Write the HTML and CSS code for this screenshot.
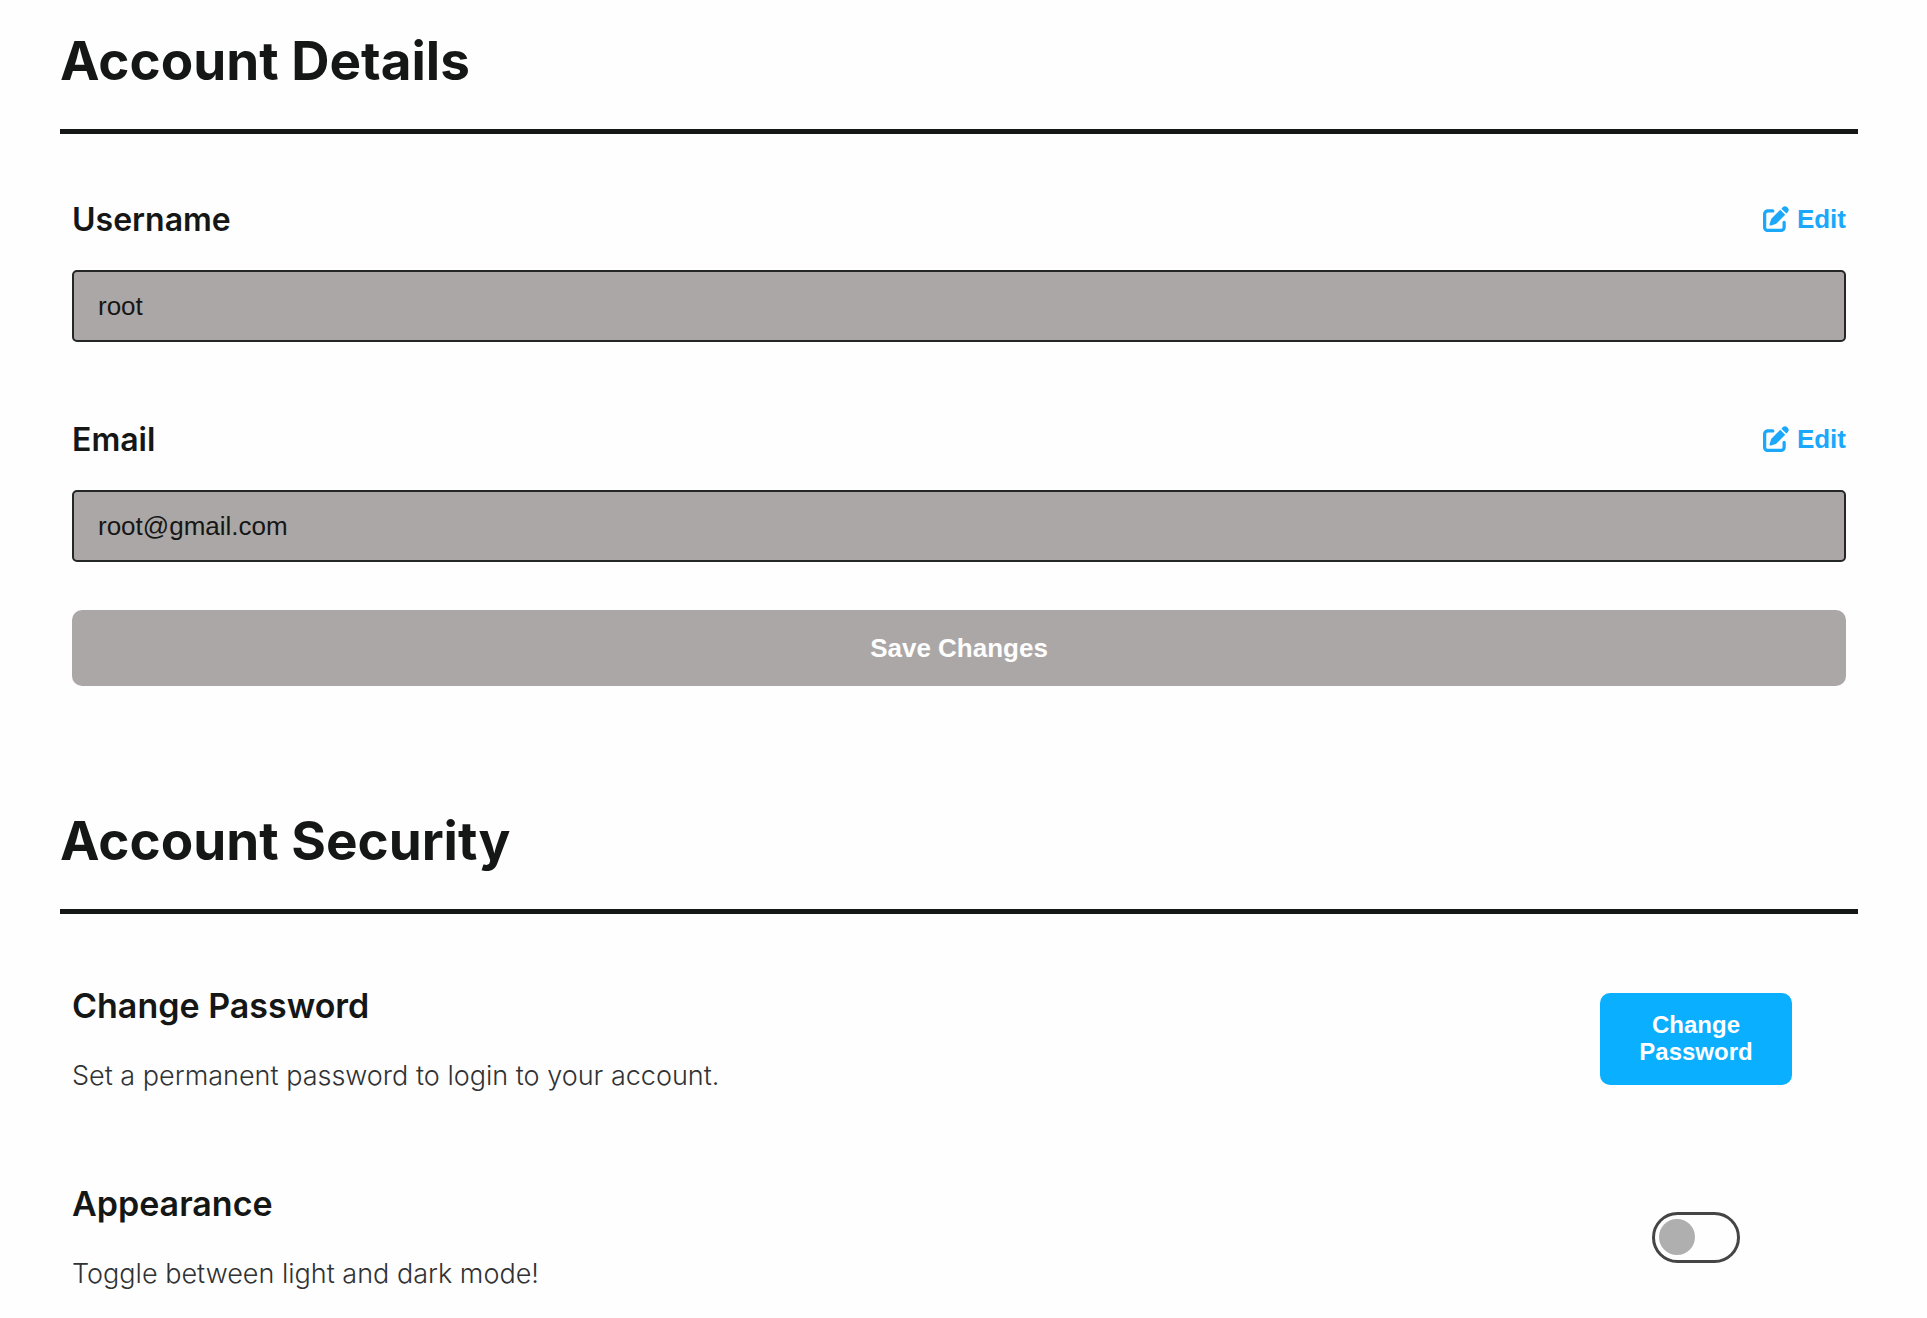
FILE: index.html
```html
<!DOCTYPE html>
<html lang="en">
<head>
<meta charset="utf-8">
<meta name="viewport" content="width=device-width, initial-scale=1">
<title>Account Settings</title>
<link rel="stylesheet" href="styles.css">
</head>
<body>
<svg class="sprite" aria-hidden="true">
  <symbol id="icon-edit" viewBox="0 0 512 512">
    <path d="M471.600 21.700c-21.900-21.900-57.300-21.900-79.200 0L362.300 51.700l97.900 97.900 30.100-30.100c21.900-21.900 21.900-57.300 0-79.200L471.600 21.700zm-299.200 220c-6.100 6.100-10.800 13.600-13.500 21.900l-29.600 88.800c-2.900 8.600-.6 18.100 5.800 24.600s15.900 8.700 24.600 5.800l88.800-29.600c8.200-2.700 15.700-7.400 21.900-13.500L437.700 172.300 339.700 74.300 172.400 241.700zM96 64C43 64 0 107 0 160V416c0 53 43 96 96 96H352c53 0 96-43 96-96V320c0-17.700-14.300-32-32-32s-32 14.300-32 32v96c0 17.700-14.300 32-32 32H96c-17.700 0-32-14.300-32-32V160c0-17.700 14.300-32 32-32h96c17.700 0 32-14.300 32-32s-14.300-32-32-32H96z"/>
  </symbol>
</svg>
<main class="settings">
  <section>
    <h1 class="section-title">Account Details</h1>
    <form class="form">
      <div class="field">
        <div class="field-head">
          <label class="label" for="username">Username</label>
          <button class="edit" type="button"><svg class="edit-icon" aria-hidden="true"><use href="#icon-edit"/></svg>Edit</button>
        </div>
        <input class="input" id="username" type="text" value="root" disabled>
      </div>
      <div class="field">
        <div class="field-head">
          <label class="label" for="email">Email</label>
          <button class="edit" type="button"><svg class="edit-icon" aria-hidden="true"><use href="#icon-edit"/></svg>Edit</button>
        </div>
        <input class="input" id="email" type="email" value="root@gmail.com" disabled>
      </div>
      <button class="save" type="submit" disabled>Save Changes</button>
    </form>
  </section>
  <section>
    <h1 class="section-title">Account Security</h1>
    <div class="options">
      <div class="option">
        <div>
          <h2 class="option-title">Change Password</h2>
          <p class="option-text">Set a permanent password to login to your account.</p>
        </div>
        <div class="option-control">
          <button class="change" type="button">Change Password</button>
        </div>
      </div>
      <div class="option">
        <div>
          <h2 class="option-title"><label for="theme">Appearance</label></h2>
          <p class="option-text">Toggle between light and dark mode!</p>
        </div>
        <div class="option-control">
          <input class="toggle" id="theme" type="checkbox" role="switch">
        </div>
      </div>
    </div>
  </section>
</main>
</body>
</html>
```
FILE: styles.css
```css
* {
  box-sizing: border-box;
}

body {
  margin: 0;
  background: #fefefe;
  color: #151716;
  font-family: Inter, "Liberation Sans", sans-serif;
}

.sprite {
  display: none;
}

.settings {
  display: flex;
  flex-direction: column;
  gap: 123px;
  padding: 29px 69px 0 60px;
}

.section-title {
  margin: 0;
  padding-bottom: 36px;
  border-bottom: 5px solid #151716;
  font-size: 53px;
  font-weight: 700;
  line-height: 64px;
}

.form {
  display: flex;
  flex-direction: column;
  padding: 64px 12px 0;
}

.field {
  margin-bottom: 76px;
}

.field + .field {
  margin-bottom: 48px;
}

.field-head {
  display: flex;
  justify-content: space-between;
  align-items: flex-start;
  height: 44px;
  margin-bottom: 28px;
}

.label {
  font-size: 32px;
  font-weight: 600;
  line-height: 44px;
}

.edit {
  display: flex;
  align-items: center;
  gap: 8px;
  padding: 0;
  border: 0;
  background: none;
  color: #1ba8fb;
  font: 700 26px/42px "Liberation Sans", Arial, sans-serif;
}

.edit-icon {
  width: 26px;
  height: 26px;
  fill: currentColor;
}

.input {
  display: block;
  width: 100%;
  height: 72px;
  padding: 0 24px;
  border: 2px solid #252727;
  border-radius: 5px;
  background: #aba7a6;
  color: #151716;
  font: 26px "Liberation Sans", Arial, sans-serif;
}

.save {
  height: 76px;
  border: 0;
  border-radius: 10px;
  background: #aba7a6;
  color: #fefefe;
  font: 700 26px "Liberation Sans", Arial, sans-serif;
}

.options {
  display: flex;
  flex-direction: column;
  gap: 84px;
  padding: 68px 12px 40px;
}

.option {
  display: flex;
  justify-content: space-between;
  align-items: center;
}

.option-title {
  margin: 0 0 26px;
  font-size: 34px;
  font-weight: 600;
  line-height: 48px;
}

.option-text {
  margin: 0;
  color: #303234;
  font-size: 27px;
  font-weight: 300;
  line-height: 40px;
}

.option-control {
  display: flex;
  justify-content: center;
  width: 300px;
}

.change {
  width: 192px;
  padding: 18px 24px 20px;
  border: 0;
  border-radius: 10px;
  background: #0aafff;
  color: #fefefe;
  font: 700 24px/27px "Liberation Sans", Arial, sans-serif;
}

.toggle {
  display: flex;
  align-items: center;
  width: 88px;
  height: 51px;
  margin: 0;
  padding: 0 4px;
  appearance: none;
  border: 3px solid #454545;
  border-radius: 26px;
}

.toggle::before {
  content: "";
  width: 36px;
  height: 36px;
  border-radius: 50%;
  background: #afafaf;
}

.toggle:checked {
  justify-content: flex-end;
}
```
